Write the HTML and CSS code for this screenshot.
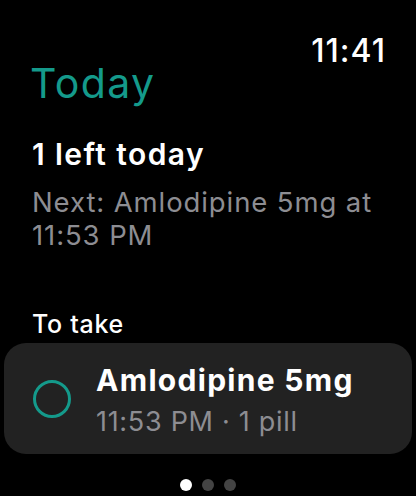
FILE: index.html
```html
<!DOCTYPE html>
<html>
<head>
<meta charset="utf-8">
<link rel="stylesheet" href="styles.css">
</head>
<body>
<div class="screen">
  <div class="status"><span class="clock">11:41</span></div>
  <h1 class="title">Today</h1>
  <div class="summary">
    <div class="left">1 left today</div>
    <div class="next">Next: Amlodipine 5mg at 11:53 PM</div>
  </div>
  <div class="section">To take</div>
  <div class="card">
    <svg class="check" width="40" height="40" viewBox="0 0 40 40"><circle cx="20" cy="20" r="17.5" fill="none" stroke="#149a8b" stroke-width="3"/></svg>
    <div class="info">
      <div class="name">Amlodipine 5mg</div>
      <div class="meta">11:53 PM · 1 pill</div>
    </div>
  </div>
  <div class="dots"><span class="dot active"></span><span class="dot"></span><span class="dot"></span></div>
</div>
</body>
</html>
```
FILE: styles.css
```css
html, body { margin: 0; padding: 0; background: #000; }
body { font-family: Inter, "Noto Sans", sans-serif; color: #fff; }
.screen { width: 416px; height: 496px; display: flex; flex-direction: column; overflow: hidden; }
.status { display: flex; justify-content: flex-end; padding: 39px 31px 0 0; height: 24px; }
.clock { font-size: 32px; font-weight: 500; line-height: 24px; letter-spacing: 1px; margin-right: -1px; }
.title { margin: 0; padding-left: 30px; font-size: 41px; font-weight: 400; line-height: 40px; color: #149a8b; letter-spacing: 1.4px; }
.summary { padding: 33px 32px 0 32px; }
.left { font-size: 30px; font-weight: 600; line-height: 36px; letter-spacing: 1.4px; }
.next { margin-top: 13.5px; font-size: 27.5px; font-weight: 400; line-height: 33px; color: #8d8d92; letter-spacing: 0.9px; }
.section { padding: 57.5px 32px 0 32px; font-size: 25px; font-weight: 500; line-height: 30px; letter-spacing: 0.7px; }
.card { margin: 4px 4px 0 4px; height: 111px; background: #222; border-radius: 22px; display: flex; align-items: flex-start; padding: 19px 0 0 28px; box-sizing: border-box; }
.check { flex: none; align-self: center; margin-top: -19px; }
.info { margin-left: 24px; display: flex; flex-direction: column; }
.name { font-size: 30px; font-weight: 700; line-height: 36px; letter-spacing: 1.3px; }
.meta { font-size: 27px; font-weight: 400; line-height: 36px; color: #8d8d92; margin-top: 6px; letter-spacing: 0.7px; }
.dots { display: flex; justify-content: center; gap: 10px; margin-top: 25px; }
.dot { width: 12px; height: 12px; border-radius: 50%; background: #444; }
.dot.active { background: #fff; }
```
